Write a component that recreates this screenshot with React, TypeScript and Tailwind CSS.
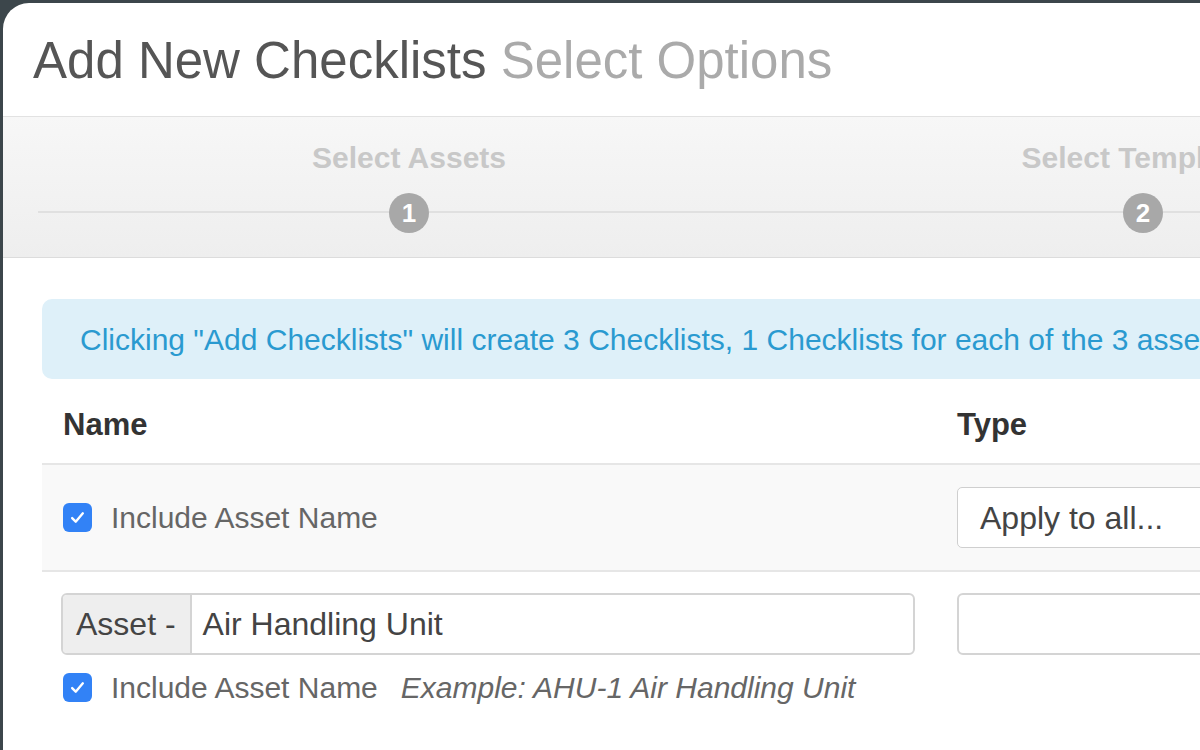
import React from "react";

const FONT = { fontFamily: '"Liberation Sans", Arial, sans-serif' };

function Check() {
  return (
    <span className="flex h-[29px] w-[29px] shrink-0 items-center justify-center rounded-[6px] bg-[#3282f6]">
      <svg width="19" height="19" viewBox="0 0 16 16" fill="none">
        <path d="M3.5 8.5l3 3 6-7" stroke="white" strokeWidth="2" strokeLinecap="round" strokeLinejoin="round" />
      </svg>
    </span>
  );
}

function Step({ n, label }: { n: number; label: string }) {
  return (
    <div className="relative flex w-[734px] shrink-0 flex-col items-center">
      <div className="h-[30px] whitespace-nowrap text-[30px] font-bold leading-[30px] text-[#c8c8c8]">
        {label}
      </div>
      <div className="mt-[20px] flex h-[40px] w-[40px] items-center justify-center rounded-full bg-[#a8a8a8] text-[26px] font-bold text-white">
        {n}
      </div>
    </div>
  );
}

export default function App() {
  return (
    <div className="h-[750px] w-[1200px] overflow-hidden bg-[#3c464b] pl-[3px] pt-[3px]" style={FONT}>
      <div className="h-[800px] w-[1600px] rounded-tl-[26px] bg-white">
        {/* header */}
        <div className="flex h-[114px] items-center border-b border-[#e2e2e2] pl-[30px] pt-[2px]">
          <h1 className="text-[51px] leading-none text-[#555]">
            Add New Checklists <span className="text-[#aaa]">Select Options</span>
          </h1>
        </div>

        {/* steps */}
        <div className="relative h-[141px] border-b border-[#dcdcdc] bg-gradient-to-b from-[#f7f7f7] to-[#eeeeee] pl-[39px] pt-[26px]">
          <div className="absolute left-[35px] right-0 top-[94px] h-[2px] bg-[#e0e0e0]" />
          <div className="flex">
            <Step n={1} label="Select Assets" />
            <Step n={2} label="Select Templates" />
          </div>
        </div>

        {/* body */}
        <div className="pl-[39px] pt-[41px]">
          <div className="flex h-[80px] items-center whitespace-nowrap rounded-[10px] bg-[#def0f9] pl-[38px] text-[30px] text-[#2a9ad0]">
            Clicking "Add Checklists" will create 3 Checklists, 1 Checklists for each of the 3 assets
          </div>

          <div className="flex h-[86px] items-center border-b-2 border-[#e6e6e6] pt-[8px] text-[31px] font-bold text-[#333]">
            <div className="w-[894px] pl-[21px]">Name</div>
            <div className="pl-[21px]">Type</div>
          </div>

          <div className="flex h-[107px] items-center border-b-2 border-[#e6e6e6] bg-[#f9f9f9]">
            <div className="flex w-[894px] items-center gap-[19px] pl-[21px] text-[30px] text-[#666]">
              <Check />
              <span>Include Asset Name</span>
            </div>
            <div className="pl-[21px]">
              <div className="flex h-[61px] w-[500px] items-center rounded-[5px] border border-[#cfcfcf] bg-white pl-[22px] text-[32px] text-[#444]">
                Apply to all...
              </div>
            </div>
          </div>

          <div className="flex pt-[21px]">
            <div className="w-[894px] pl-[19px] pr-[21px]">
              <div className="flex h-[62px] overflow-hidden rounded-[6px] border-2 border-[#d4d4d4] text-[32px] text-[#444]">
                <div className="flex items-center border-r-2 border-[#d4d4d4] bg-[#eeeeee] px-[13px] pr-[14px]">Asset -</div>
                <div className="flex items-center pl-[11px]">Air Handling Unit</div>
              </div>
              <div className="mt-[10px] flex items-center gap-[19px] pl-[2px] text-[30px] text-[#666]">
                <Check />
                <span>Include Asset Name</span>
                <span className="ml-[4px] italic">Example: AHU-1 Air Handling Unit</span>
              </div>
            </div>
            <div className="pl-[21px]">
              <div className="h-[62px] w-[500px] rounded-[6px] border-2 border-[#d4d4d4] bg-white" />
            </div>
          </div>
        </div>
      </div>
    </div>
  );
}
